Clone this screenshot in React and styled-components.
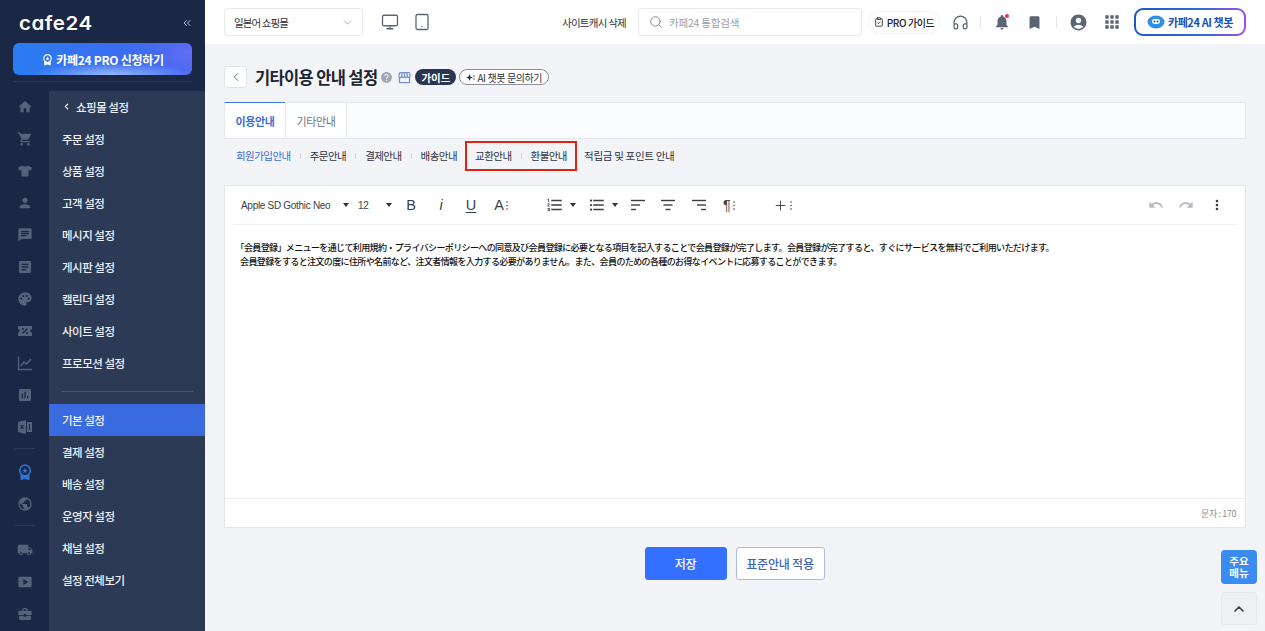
import React from 'react'
import styled, { createGlobalStyle } from 'styled-components'
import {
  MdHome, MdShoppingCart, MdChat, MdPerson, MdArticle, MdPalette, MdBookmark,
  MdLocalShipping, MdSmartDisplay, MdBusinessCenter, MdNotifications,
  MdAccountCircle, MdApps, MdUndo, MdRedo, MdMoreVert, MdFormatListNumbered, MdFormatListBulleted,
  MdHelp, MdStorefront, MdPublic, MdWorkspacePremium, MdAssessment,
} from 'react-icons/md'
import { FaTshirt } from 'react-icons/fa'
import { ChevronDown, ChevronLeft, ChevronUp, ChevronsLeft, Monitor, Tablet, Search, Headphones, ClipboardCheck, Plus } from 'lucide-react'

const GlobalStyle = createGlobalStyle`
  html, body { margin: 0; padding: 0; height: 100%; overflow: hidden; }
  body { font-family: "Noto Sans CJK KR", "Noto Sans", sans-serif; color: #1f2530; background: #f2f4f8; }
  * { box-sizing: border-box; }
`

const Page = styled.div`
  display: flex;
  width: 1265px;
  height: 631px;
  overflow: hidden;
`

const Sidebar = styled.aside`
  width: 205px;
  flex: none;
  display: flex;
  flex-direction: column;
  background: #1a2745;
`

const SideTop = styled.div`
  height: 91px;
  flex: none;
  padding: 0 13px;
`

const LogoRow = styled.div`
  height: 43px;
  display: flex;
  align-items: center;
  justify-content: space-between;
  padding: 3px 0 0 6px;
  color: #fff;
`

const Logo = styled.span`
  font-family: Inter, sans-serif;
  font-feature-settings: "cv11" 1;
  font-size: 19px;
  font-weight: 600;
  letter-spacing: 0.5px;
  line-height: 1;
  transform: scaleX(1.08);
  transform-origin: left center;
`

const Collapse = styled.span`
  display: flex;
  color: #b8c0d0;
  margin-right: -1px;
`

const ProButton = styled.div`
  height: 32px;
  border-radius: 6px;
  display: flex;
  align-items: center;
  justify-content: center;
  gap: 2px;
  color: #fff;
  font-size: 12px;
  font-weight: 700;
  letter-spacing: -0.3px;
  background: radial-gradient(ellipse 80px 12px at 55% 100%, rgba(190, 215, 255, .7), transparent),
    radial-gradient(ellipse 40px 26px at 100% 30%, rgba(120, 110, 250, .5), transparent),
    linear-gradient(90deg, #2a7cf2 0%, #3a6df0 60%, #4a6af0 100%);
`

const SideRule = styled.div`
  height: 1px;
  margin-top: 6px;
  background: #2b3853;
`

const SideBody = styled.div`
  flex: 1;
  display: flex;
  min-height: 0;
`

const Rail = styled.div`
  width: 49px;
  flex: none;
  display: flex;
  flex-direction: column;
  align-items: center;
  color: #56627a;
`

const RailIcon = styled.span`
  height: 32px;
  flex: none;
  display: flex;
  align-items: center;
  justify-content: center;
  color: ${p => p.$color || 'inherit'};
`

const RailRule = styled.div`
  width: 20px;
  height: 1px;
  flex: none;
  background: #2f3b56;
  margin: ${p => p.$m};
`

const Panel = styled.nav`
  flex: 1;
  background: #2d3a56;
`

const MenuItem = styled.div`
  height: 32px;
  display: flex;
  align-items: center;
  gap: 5px;
  padding: 0 0 1px 13px;
  color: #eef0f5;
  font-size: 11.5px;
  font-weight: 500;
  letter-spacing: -0.5px;
  background: ${p => (p.$active ? '#3a6ae0' : 'transparent')};
`

const MenuRule = styled.div`
  height: 1px;
  margin: 12px 12px;
  background: #4a5672;
`

const Main = styled.div`
  flex: 1;
  min-width: 0;
  display: flex;
  flex-direction: column;
`

const Header = styled.header`
  height: 44px;
  flex: none;
  display: flex;
  align-items: center;
  padding: 0 19px;
  background: #fff;
`

const SiteSelect = styled.div`
  width: 139px;
  height: 28px;
  display: flex;
  align-items: center;
  justify-content: space-between;
  padding: 0 8px 0 9px;
  border: 1px solid #e6e8ee;
  border-radius: 3px;
  font-size: 10.5px;
  letter-spacing: -0.9px;
  color: #2c323c;
  svg { color: #9aa0aa; }
`

const DeviceIcon = styled.span`
  display: flex;
  color: #5b6472;
  margin-left: ${p => p.$ml}px;
`

const CacheLink = styled.span`
  margin-left: auto;
  font-size: 10.5px;
  letter-spacing: -0.75px;
  color: #2c323c;
`

const SearchBox = styled.div`
  width: 224px;
  height: 28px;
  margin-left: 12px;
  display: flex;
  align-items: center;
  gap: 6px;
  padding-left: 10px;
  border: 1px solid #e8eaef;
  border-radius: 3px;
  font-size: 10.5px;
  letter-spacing: -0.2px;
  color: #9aa0aa;
  svg { color: #7e8590; }
`

const GuidePill = styled.div`
  width: 72px;
  height: 23px;
  margin-left: 6px;
  display: flex;
  align-items: center;
  justify-content: center;
  gap: 3px;
  border: 1px solid #eef0f3;
  border-radius: 12px;
  font-size: 10px;
  font-weight: 500;
  letter-spacing: -0.4px;
  color: #222;
`

const HeadIcon = styled.span`
  display: flex;
  position: relative;
  color: #5b6472;
  margin-left: ${p => p.$ml}px;
`

const Dot = styled.i`
  position: absolute;
  top: 1px;
  right: 2px;
  width: 4px;
  height: 4px;
  border-radius: 50%;
  background: #e8334a;
`

const HeadRule = styled.span`
  width: 1px;
  height: 12px;
  background: #e3e5ea;
  margin-left: ${p => p.$ml}px;
`

const ChatButton = styled.div`
  width: 112px;
  height: 28px;
  margin-left: 12px;
  display: flex;
  align-items: center;
  justify-content: center;
  gap: 3px;
  border-radius: 9px;
  border: 2px solid transparent;
  background: linear-gradient(#fff, #fff) padding-box, linear-gradient(90deg, #1e56c8, #2f6ae0 60%, #a04fe0) border-box;
  color: #1d4fb8;
  font-size: 11px;
  font-weight: 700;
  letter-spacing: -0.4px;
`

const Content = styled.main`
  flex: 1;
  min-height: 0;
  padding: 22px 19px 0;
  position: relative;
`

const TitleRow = styled.div`
  height: 22px;
  display: flex;
  align-items: center;
`

const BackButton = styled.span`
  width: 23px;
  height: 22px;
  display: flex;
  align-items: center;
  justify-content: center;
  background: #fff;
  border: 1px solid #dfe2e8;
  border-radius: 3px;
  color: #555c68;
`

const Title = styled.h1`
  margin: 0 0 0 8px;
  font-size: 16.5px;
  font-weight: 700;
  letter-spacing: -0.65px;
  color: #1f2530;
`

const TitleIcon = styled.span`
  display: flex;
  color: ${p => p.$color};
  margin-left: ${p => p.$ml}px;
`

const GuideBadge = styled.span`
  height: 16px;
  padding: 0 6px;
  margin-left: 3px;
  display: flex;
  align-items: center;
  border-radius: 8px;
  background: #2a3550;
  color: #fff;
  font-size: 10.5px;
  font-weight: 700;
`

const AiBadge = styled.span`
  height: 16px;
  padding: 0 6px;
  margin-left: 3px;
  display: flex;
  align-items: center;
  gap: 2px;
  border-radius: 8px;
  border: 1px solid #8a909c;
  background: #fff;
  font-size: 10px;
  letter-spacing: -0.4px;
  color: #2c323c;
`

const Tabs = styled.div`
  margin-top: 14px;
  height: 37px;
  display: flex;
  background: #fbfcfd;
  border: 1px solid #e6e8ed;
  border-left: 0;
`

const Tab = styled.div`
  width: ${p => p.$w}px;
  display: flex;
  align-items: center;
  justify-content: center;
  font-size: 11px;
  letter-spacing: -0.4px;
  margin-top: -1px;
  font-weight: ${p => (p.$active ? 700 : 400)};
  color: ${p => (p.$active ? '#3b6fd8' : '#6d737e')};
  background: #fff;
  border-top: ${p => (p.$active ? '1px solid #3b78e8' : '1px solid #e6e8ed')};
  border-left: 1px solid #e6e8ed;
  border-right: ${p => (p.$active ? '0' : '1px solid #e6e8ed')};
`

const SubTabs = styled.div`
  height: 32px;
  margin-bottom: 14px;
  display: flex;
  align-items: center;
  padding: 2px 0 0 12px;
`

const SubTab = styled.span`
  font-size: 10.5px;
  letter-spacing: ${p => p.$ls || -0.55}px;
  padding-bottom: 1px;
  color: ${p => (p.$active ? '#3b6fd8' : '#2c323c')};
  white-space: nowrap;
`

const SubSep = styled.span`
  width: 1px;
  height: 6px;
  margin: 0 9px;
  background: #d4d7dd;
`

const Highlight = styled.div`
  width: 112px;
  height: 30px;
  margin-left: 8px;
  margin-right: 7px;
  display: flex;
  align-items: center;
  justify-content: center;
  border: 2px solid #e3230f;
`

const Editor = styled.section`
  height: 343px;
  display: flex;
  flex-direction: column;
  background: #fff;
  border: 1px solid #e3e5ea;
`

const Toolbar = styled.div`
  height: 38px;
  flex: none;
  display: flex;
  align-items: center;
  padding-left: 16px;
  color: #3a3f47;
  font-family: "Liberation Sans", sans-serif;
`

const ToolSelect = styled.div`
  width: ${p => p.$w}px;
  display: flex;
  align-items: center;
  justify-content: space-between;
  padding: 0 4px 0 ${p => p.$pl || 0}px;
  font-size: 10px;
  letter-spacing: -0.3px;
`

const Caret = styled.i`
  width: 0;
  height: 0;
  border-left: 3.5px solid transparent;
  border-right: 3.5px solid transparent;
  border-top: 4px solid #333;
`

const Tool = styled.span`
  width: ${p => p.$w || 30}px;
  height: 24px;
  flex: none;
  display: flex;
  align-items: center;
  justify-content: center;
  gap: 2px;
  margin-left: ${p => p.$ml || 0}px;
  margin-right: ${p => p.$mr || 0}px;
  font-size: 14.5px;
  font-style: ${p => (p.$italic ? 'italic' : 'normal')};
  text-decoration: ${p => (p.$under ? 'underline' : 'none')};
  text-underline-offset: 2px;
  color: ${p => p.$color || 'inherit'};
`

const SplitTool = styled.span`
  width: ${p => p.$w}px;
  margin-left: ${p => p.$ml || 0}px;
  flex: none;
  display: flex;
  align-items: center;
  gap: 6px;
`

const ToolSpacer = styled.span`
  flex: 1;
`

const ToolRule = styled.div`
  height: 1px;
  flex: none;
  margin: 0 8px;
  background: #eceef1;
`

const Body = styled.div`
  flex: 1;
  padding: 16px 15px;
  font-family: "Noto Sans CJK JP", "Noto Sans CJK KR", sans-serif;
  font-size: 9px;
  font-weight: 500;
  letter-spacing: -0.62px;
  line-height: 14px;
  color: #111;
  white-space: nowrap;
  text-spacing-trim: trim-start;
`

const Count = styled.div`
  height: 29px;
  flex: none;
  border-top: 1px solid #eceef1;
  display: flex;
  align-items: center;
  justify-content: flex-end;
  padding-right: 9px;
  font-size: 9px;
  letter-spacing: -0.4px;
  color: #8b9098;
`

const Actions = styled.div`
  margin-top: 19px;
  display: flex;
  justify-content: center;
  gap: 9px;
  padding-right: 1px;
`

const Button = styled.button`
  width: ${p => p.$w}px;
  height: 33px;
  padding: 0;
  border-radius: 3px;
  font-family: inherit;
  font-size: 12px;
  font-weight: 500;
  letter-spacing: -0.2px;
  border: 1px solid ${p => (p.$primary ? '#3370ff' : '#a8bce6')};
  background: ${p => (p.$primary ? '#3370ff' : '#fff')};
  color: ${p => (p.$primary ? '#fff' : '#3d66b8')};
`

const QuickMenu = styled.div`
  position: absolute;
  top: 506px;
  right: 8px;
  width: 36px;
  height: 34px;
  display: flex;
  align-items: center;
  justify-content: center;
  text-align: center;
  border-radius: 4px;
  background: #3b8cf2;
  color: #fff;
  font-size: 10.5px;
  font-weight: 700;
  line-height: 12px;
`

const TopButton = styled.div`
  position: absolute;
  top: 548px;
  right: 8px;
  width: 36px;
  height: 33px;
  display: flex;
  align-items: center;
  justify-content: center;
  border: 1px solid #e6e8ec;
  border-radius: 3px;
  background: #eff0f3;
  color: #3c434f;
`

const AlignIcon = ({ mode }) => {
  const x = w => (mode === 'left' ? 2 : mode === 'center' ? (16 - w) / 2 : 15 - w)
  return (
    <svg width="16" height="16" viewBox="0 0 16 16" stroke="#3a3f47" strokeWidth="1.4">
      {[[14, 3.5], [9, 8], [5, 12.5]].map(([w, y]) => (
        <line key={y} x1={x(w)} x2={x(w) + w} y1={y} y2={y} />
      ))}
    </svg>
  )
}

// the three small dots froala puts after a dropdown tool
const MoreDots = () => (
  <svg width="2" height="9" viewBox="0 0 2 9" fill="currentColor">
    <circle cx="1" cy="1" r=".8" />
    <circle cx="1" cy="4.5" r=".8" />
    <circle cx="1" cy="8" r=".8" />
  </svg>
)

// rail icons with no close match in the packages
const TicketIcon = ({ size }) => (
  <svg width={size} height={size} viewBox="0 0 16 16" fill="currentColor">
    <path d="M1 3h14v3.2a1.8 1.8 0 0 0 0 3.6V13H1V9.8a1.8 1.8 0 0 0 0-3.6z" />
    <path d="M5.5 10.5l5-5" stroke="#1a2745" strokeWidth="1.2" />
    <circle cx="6" cy="6" r="1" fill="#1a2745" />
    <circle cx="10" cy="10" r="1" fill="#1a2745" />
  </svg>
)

const AxisChartIcon = ({ size }) => (
  <svg width={size} height={size} viewBox="0 0 16 16" fill="none" stroke="currentColor" strokeWidth="1.3">
    <path d="M1.5 1.5v13h13.5" />
    <path d="M3.5 11l3.5-4 2.5 2 4.5-5" strokeWidth="1.6" />
  </svg>
)

const SheetIcon = ({ size }) => (
  <svg width={size} height={size} viewBox="0 0 16 16" fill="currentColor">
    <path d="M1 3l8-2v14l-8-2z" />
    <path d="M10 3h5v10h-5z" />
    <path d="M3.5 6l3 4M6.5 6l-3 4" stroke="#1a2745" strokeWidth="1.1" />
    <path d="M12.5 5v6" stroke="#1a2745" strokeWidth="1.1" />
  </svg>
)

const BotFace = () => (
  <svg width="18" height="14" viewBox="0 0 18 14">
    <ellipse cx="9" cy="7" rx="8.5" ry="6.5" fill="#2f8fe0" />
    <rect x="5" y="4" width="8" height="5" rx="2.4" fill="#fff" />
    <circle cx="7.5" cy="6.5" r="1" fill="#1d4fb8" />
    <circle cx="10.5" cy="6.5" r="1" fill="#1d4fb8" />
  </svg>
)

const SparkDots = () => (
  <svg width="9" height="9" viewBox="0 0 9 9" fill="#2c323c">
    <path d="M3.5 1l.9 2.6L7 4.5l-2.6.9L3.5 8l-.9-2.6L0 4.5l2.6-.9z" />
    <circle cx="8" cy="3" r=".7" />
    <circle cx="8" cy="6" r=".7" />
  </svg>
)

const railTop = [MdHome, MdShoppingCart, FaTshirt, MdPerson, MdChat, MdArticle, MdPalette, TicketIcon, AxisChartIcon, MdAssessment, SheetIcon]
const railBottom = [MdLocalShipping, MdSmartDisplay, MdBusinessCenter]
const menuTop = ['주문 설정', '상품 설정', '고객 설정', '메시지 설정', '게시판 설정', '캘린더 설정', '사이트 설정', '프로모션 설정']
const menuBottom = ['결제 설정', '배송 설정', '운영자 설정', '채널 설정', '설정 전체보기']

export default function App() {
  return (
    <Page>
      <GlobalStyle />
      <Sidebar>
        <SideTop>
          <LogoRow>
            <Logo>cafe24</Logo>
            <Collapse><ChevronsLeft size={12} /></Collapse>
          </LogoRow>
          <ProButton><MdWorkspacePremium size={13} />카페24 PRO 신청하기</ProButton>
          <SideRule />
        </SideTop>
        <SideBody>
          <Rail>
            {railTop.map((Icon, i) => (
              <RailIcon key={i}><Icon size={i === 2 ? 14 : 16} /></RailIcon>
            ))}
            <RailRule $m="5px 0 7px" />
            <RailIcon $color="#2f78d8"><MdWorkspacePremium size={18} /></RailIcon>
            <RailIcon><MdPublic size={16} /></RailIcon>
            <RailRule $m="5px 0 8px" />
            {railBottom.map((Icon, i) => (
              <RailIcon key={i}><Icon size={16} /></RailIcon>
            ))}
          </Rail>
          <Panel>
            <MenuItem><ChevronLeft size={9} strokeWidth={3.5} />쇼핑몰 설정</MenuItem>
            {menuTop.map(m => <MenuItem key={m}>{m}</MenuItem>)}
            <MenuRule />
            <MenuItem $active>기본 설정</MenuItem>
            {menuBottom.map(m => <MenuItem key={m}>{m}</MenuItem>)}
          </Panel>
        </SideBody>
      </Sidebar>

      <Main>
        <Header>
          <SiteSelect>일본어 쇼핑몰<ChevronDown size={13} strokeWidth={1.5} /></SiteSelect>
          <DeviceIcon $ml={18}><Monitor size={18} strokeWidth={1.7} /></DeviceIcon>
          <DeviceIcon $ml={14}><Tablet size={18} strokeWidth={1.7} /></DeviceIcon>
          <CacheLink>사이트캐시 삭제</CacheLink>
          <SearchBox><Search size={14} strokeWidth={1.6} />카페24 통합검색</SearchBox>
          <GuidePill><ClipboardCheck size={10} />PRO 가이드</GuidePill>
          <HeadIcon $ml={12}><Headphones size={17} strokeWidth={1.8} /></HeadIcon>
          <HeadRule $ml={11} />
          <HeadIcon $ml={12}><MdNotifications size={18} /><Dot /></HeadIcon>
          <HeadIcon $ml={15}><MdBookmark size={17} /></HeadIcon>
          <HeadRule $ml={13} />
          <HeadIcon $ml={12}><MdAccountCircle size={19} /></HeadIcon>
          <HeadIcon $ml={14}><MdApps size={20} /></HeadIcon>
          <ChatButton><BotFace />카페24 AI 챗봇</ChatButton>
        </Header>

        <Content>
          <TitleRow>
            <BackButton><ChevronLeft size={14} strokeWidth={1.5} /></BackButton>
            <Title>기타이용 안내 설정</Title>
            <TitleIcon $color="#a0a6b2" $ml={3}><MdHelp size={13} /></TitleIcon>
            <TitleIcon $color="#6f93cc" $ml={4}><MdStorefront size={15} /></TitleIcon>
            <GuideBadge>가이드</GuideBadge>
            <AiBadge><SparkDots />AI 챗봇 문의하기</AiBadge>
          </TitleRow>

          <Tabs>
            <Tab $w={61} $active>이용안내</Tab>
            <Tab $w={62}>기타안내</Tab>
          </Tabs>

          <SubTabs>
            <SubTab $active>회원가입안내</SubTab>
            <SubSep />
            <SubTab>주문안내</SubTab>
            <SubSep />
            <SubTab>결제안내</SubTab>
            <SubSep />
            <SubTab>배송안내</SubTab>
            <Highlight>
              <SubTab>교환안내</SubTab>
              <SubSep />
              <SubTab>환불안내</SubTab>
            </Highlight>
            <SubTab $ls={-0.3}>적립금 및 포인트 안내</SubTab>
          </SubTabs>

          <Editor>
            <Toolbar>
              <ToolSelect $w={112}>Apple SD Gothic Neo<Caret /></ToolSelect>
              <ToolSelect $w={43} $pl={5}>12<Caret /></ToolSelect>
              <Tool>B</Tool>
              <Tool $italic>i</Tool>
              <Tool $under>U</Tool>
              <Tool>A<MoreDots /></Tool>
              <SplitTool $w={42} $ml={30}><MdFormatListNumbered size={18} /><Caret /></SplitTool>
              <SplitTool $w={33}><MdFormatListBulleted size={18} /><Caret /></SplitTool>
              <Tool $w={31}><AlignIcon mode="left" /></Tool>
              <Tool $w={31}><AlignIcon mode="center" /></Tool>
              <Tool $w={31}><AlignIcon mode="right" /></Tool>
              <Tool>¶<MoreDots /></Tool>
              <Tool $ml={23}><Plus size={15} strokeWidth={1.5} /><MoreDots /></Tool>
              <ToolSpacer />
              <Tool $color="#b4b8bf"><MdUndo size={16} /></Tool>
              <Tool $color="#b4b8bf"><MdRedo size={16} /></Tool>
              <Tool $ml={1} $mr={13}><MdMoreVert size={16} /></Tool>
            </Toolbar>
            <ToolRule />
            <Body>
              「会員登録」メニューを通じて利用規約・プライバシーポリシーへの同意及び会員登録に必要となる項目を記入することで会員登録が完了します。会員登録が完了すると、すぐにサービスを無料でご利用いただけます。<br />
              会員登録をすると注文の度に住所や名前など、注文者情報を入力する必要がありません。また、会員のための各種のお得なイベントに応募することができます。
            </Body>
            <Count>문자 : 170</Count>
          </Editor>

          <Actions>
            <Button $primary $w={82}>저장</Button>
            <Button $w={89}>표준안내 적용</Button>
          </Actions>

          <QuickMenu>주요<br />메뉴</QuickMenu>
          <TopButton><ChevronUp size={16} strokeWidth={2.6} /></TopButton>
        </Content>
      </Main>
    </Page>
  )
}
